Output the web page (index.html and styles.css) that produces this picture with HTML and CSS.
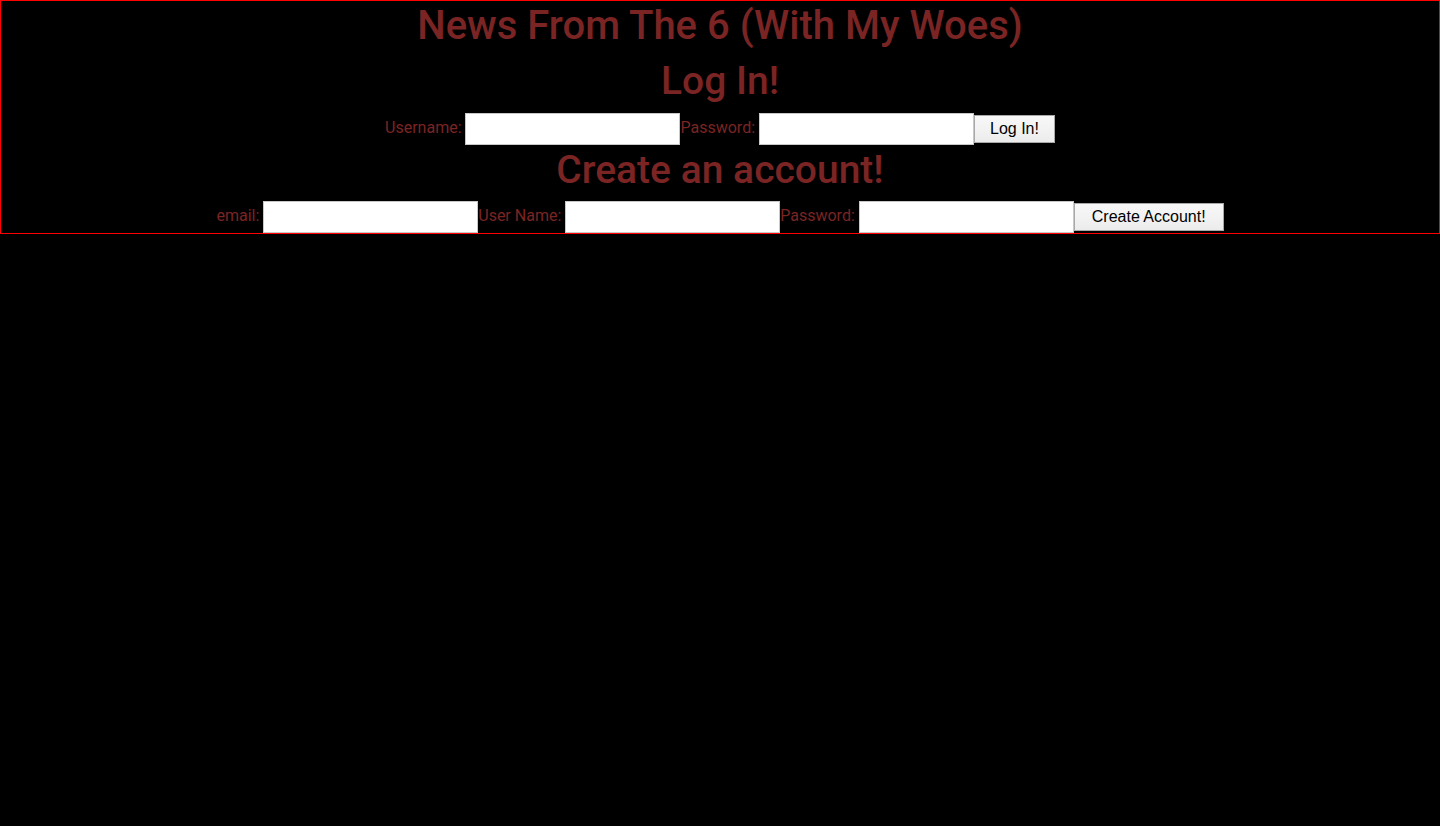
FILE: index.html
```html
<!DOCTYPE html>
<html lang="en">
<head>
<meta charset="utf-8">
<title>News From The 6 (With My Woes)</title>
<link rel="stylesheet" href="styles.css">
</head>
<body>
<div class="panel">
  <h1 class="title">News From The 6 (With My Woes)</h1>
  <h2 class="heading login-heading">Log In!</h2>
  <form class="row row-login">
    <label class="lbl">Username: </label><input class="field" type="text"><label class="lbl">Password: </label><input class="field" type="password"><button class="btn" type="button">Log In!</button>
  </form>
  <h2 class="heading create-heading">Create an account!</h2>
  <form class="row row-create">
    <label class="lbl">email: </label><input class="field" type="text"><label class="lbl">User Name: </label><input class="field" type="text"><label class="lbl">Password: </label><input class="field" type="password"><button class="btn" type="button">Create Account!</button>
  </form>
</div>
</body>
</html>
```

FILE: styles.css
```css
html, body {
  margin: 0;
  padding: 0;
  background: #000;
}

body {
  font-family: Roboto, "Noto Sans", sans-serif;
  color: #7b2424;
}

.panel {
  box-sizing: border-box;
  width: 1440px;
  height: 234px;
  border: 1px solid #ff0000;
  text-align: center;
  overflow: hidden;
}

.title {
  margin: 0;
  font-size: 40px;
  font-weight: 500;
  line-height: 50px;
}

.heading {
  font-size: 39px;
  font-weight: 500;
  line-height: 44px;
}

.login-heading {
  margin: 8px 0 9px;
}

.create-heading {
  margin: 4px 0 8px;
}

.row {
  margin: 0;
  height: 32px;
  line-height: 32px;
  font-size: 16px;
  white-space: nowrap;
}

.lbl {
  color: #7b2424;
}

.field {
  box-sizing: border-box;
  width: 215px;
  height: 32px;
  margin: 0;
  padding: 0 4px;
  border: 1px solid #c8c8c8;
  background: #fff;
  vertical-align: middle;
}

.btn {
  box-sizing: border-box;
  height: 28px;
  margin: 0;
  padding: 0 15px;
  font-family: "Liberation Sans", Arial, sans-serif;
  font-size: 16px;
  color: #000;
  background: linear-gradient(#f8f8f8, #ececec);
  border: 1px solid #a9a9a9;
  vertical-align: middle;
}

.row-create .btn {
  padding: 0 17px;
}
```
